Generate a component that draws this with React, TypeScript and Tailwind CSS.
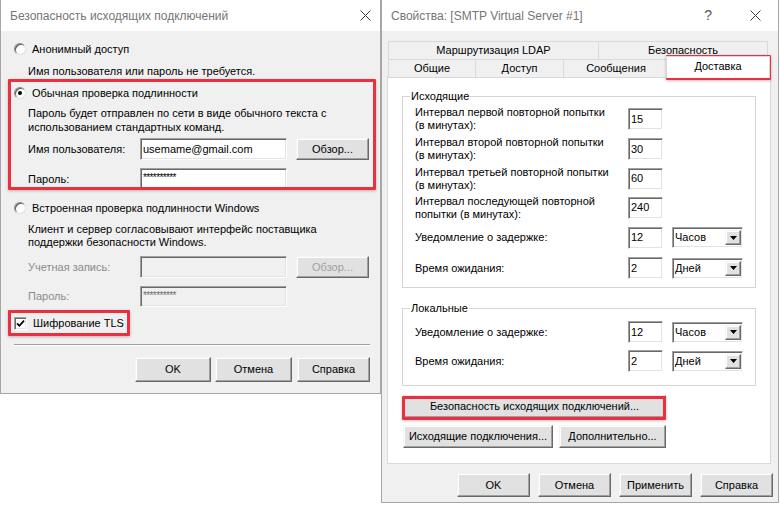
import type { ReactNode } from "react";

const sunken =
  "border border-t-[#a0a0a0] border-l-[#a0a0a0] border-b-white border-r-white shadow-[inset_1px_1px_0_#696969,inset_-1px_-1px_0_#e3e3e3]";
const raised =
  "border border-t-[#f4f4f4] border-l-[#f4f4f4] border-b-[#696969] border-r-[#696969] shadow-[inset_-1px_-1px_0_#a0a0a0,inset_1px_1px_0_#ffffff] bg-[#e1e1e1]";

function CloseIcon() {
  return (
    <svg width="11" height="11" viewBox="0 0 11 11">
      <path d="M0.5 0.5 L10.5 10.5 M10.5 0.5 L0.5 10.5" stroke="#3c3c3c" strokeWidth="1" fill="none" />
    </svg>
  );
}

function Radio({ checked = false }: { checked?: boolean }) {
  return (
    <span className="flex h-[12px] w-[12px] shrink-0 items-center justify-center rounded-full border border-t-[#8a8a8a] border-l-[#8a8a8a] border-b-[#e0e0e0] border-r-[#e0e0e0] bg-white shadow-[inset_1px_1px_0_#5a5a5a]">
      {checked && <span className="h-[4px] w-[4px] rounded-full bg-black" />}
    </span>
  );
}

function Checkbox() {
  return (
    <span className={`flex h-[13px] w-[13px] shrink-0 items-center justify-center bg-white ${sunken}`}>
      <svg width="9" height="9" viewBox="0 0 9 9">
        <path d="M1 4.3 L3.4 6.8 L8 1.6" stroke="#000" strokeWidth="1.7" fill="none" />
      </svg>
    </span>
  );
}

function TextBox({
  value = "",
  className,
  disabled = false,
  secret = false,
}: {
  value?: string;
  className: string;
  disabled?: boolean;
  secret?: boolean;
}) {
  return (
    <div
      className={`flex shrink-0 pl-[2px] ${sunken} ${
        secret ? "items-start pt-[1px] text-[10px] tracking-[-0.6px]" : "items-center"
      } ${disabled ? "bg-[#f0f0f0] text-[#6d6d6d]" : "bg-white text-black"} ${className}`}
    >
      {value}
    </div>
  );
}

function Btn({
  children,
  className,
  disabled = false,
}: {
  children: ReactNode;
  className: string;
  disabled?: boolean;
}) {
  return (
    <div
      className={`flex shrink-0 items-center justify-center whitespace-nowrap ${raised} ${
        disabled ? "text-[#a0a0a0]" : "text-black"
      } ${className}`}
    >
      {children}
    </div>
  );
}

function Select({ value }: { value: string }) {
  return (
    <div className={`flex h-[21px] w-[71px] shrink-0 items-center bg-white pl-[2px] pr-[1px] ${sunken}`}>
      <span className="flex-1">{value}</span>
      <span className={`flex h-[15px] w-[16px] items-center justify-center ${raised}`}>
        <svg width="7" height="4" viewBox="0 0 7 4">
          <path d="M0 0 H7 L3.5 4 Z" fill="#000" />
        </svg>
      </span>
    </div>
  );
}

function TitleBar({ title, help = false, pr }: { title: string; help?: boolean; pr: string }) {
  return (
    <div className={`flex h-[31px] shrink-0 items-center bg-white pl-[9px] ${pr}`}>
      <span className="flex-1 text-[12px] text-[#767676]">{title}</span>
      {help && <span className="mr-[38px] text-[14px] text-[#5a5a5a]">?</span>}
      <CloseIcon />
    </div>
  );
}

function LeftDialog() {
  return (
    <div className="flex h-[394px] w-[381px] shrink-0 flex-col border-x border-b border-[#a6a6a6] bg-[#f0f0f0]">
      <TitleBar title="Безопасность исходящих подключений" pr="pr-[9px]" />
      <div className="flex flex-col pl-[13px] pr-[10px]">
        <div className="mt-[9px] flex h-[18px] items-center gap-[6px]">
          <Radio />
          <span>Анонимный доступ</span>
        </div>
        <div className="ml-[14px] mt-[5px] flex h-[16px] items-center">
          Имя пользователя или пароль не требуется.
        </div>
        <div className="mt-[6px] flex h-[16px] items-center gap-[6px]">
          <Radio checked />
          <span>Обычная проверка подлинности</span>
        </div>
        <div className="ml-[14px] mt-[5px] leading-[14px]">
          Пароль будет отправлен по сети в виде обычного текста с<br />
          использованием стандартных команд.
        </div>
        <div className="mt-[4px] flex h-[22px] items-center">
          <span className="ml-[14px] w-[112px] shrink-0">Имя пользователя:</span>
          <TextBox value="usemame@gmail.com" className="h-[22px] w-[147px]" />
          <Btn className="ml-[9px] h-[22px] w-[73px]">Обзор...</Btn>
        </div>
        <div className="mt-[8px] flex h-[22px] items-center">
          <span className="ml-[14px] w-[112px] shrink-0">Пароль:</span>
          <TextBox value="**********" secret className="h-[22px] w-[147px]" />
        </div>
        <div className="mt-[10px] flex h-[16px] items-center gap-[6px]">
          <Radio />
          <span>Встроенная проверка подлинности Windows</span>
        </div>
        <div className="ml-[14px] mt-[7px] leading-[13px]">
          Клиент и сервер согласовывают интерфейс поставщика
          <br />
          поддержки безопасности Windows.
        </div>
        <div className="mt-[7px] flex h-[22px] items-center text-[#8a8a8a]">
          <span className="ml-[14px] w-[112px] shrink-0">Учетная запись:</span>
          <TextBox disabled className="h-[22px] w-[147px]" />
          <Btn disabled className="ml-[9px] h-[22px] w-[73px]">
            Обзор...
          </Btn>
        </div>
        <div className="mt-[8px] flex h-[21px] items-center text-[#8a8a8a]">
          <span className="ml-[14px] w-[112px] shrink-0">Пароль:</span>
          <TextBox disabled secret value="**********" className="h-[21px] w-[147px]" />
        </div>
        <div className="mt-[8px] flex h-[16px] items-center gap-[6px]">
          <Checkbox />
          <span>Шифрование TLS</span>
        </div>
        <div className="mt-[13px] h-[2px] border-t border-b border-t-[#a0a0a0] border-b-white" />
        <div className="mt-[11px] flex h-[25px] justify-end">
          <Btn className="h-[25px] w-[76px]">OK</Btn>
          <Btn className="ml-[4px] h-[25px] w-[77px]">Отмена</Btn>
          <Btn className="ml-[5px] h-[25px] w-[73px]">Справка</Btn>
        </div>
      </div>
    </div>
  );
}

function Tab({ label, className }: { label: string; className: string }) {
  return (
    <div
      className={`flex h-[18px] shrink-0 items-center justify-center border-l border-t border-[#d9d9d9] bg-[#f0f0f0] ${className}`}
    >
      {label}
    </div>
  );
}

function Row({ h, label, value, unit }: { h: string; label: ReactNode; value: string; unit?: string }) {
  return (
    <div className={`flex items-center pl-[12px] ${h}`}>
      <div className="w-[213px] shrink-0 leading-[13px]">{label}</div>
      <TextBox value={value} className="h-[22px] w-[35px]" />
      {unit && (
        <div className="ml-[9px]">
          <Select value={unit} />
        </div>
      )}
    </div>
  );
}

function RightDialog() {
  return (
    <div className="flex h-[503px] w-[398px] shrink-0 flex-col border-x border-b border-[#a6a6a6] bg-[#f0f0f0]">
      <TitleBar title="Свойства: [SMTP Virtual Server #1]" help pr="pr-[17px]" />
      <div className="mt-[10px] ml-[6px] flex w-[380px]">
        <Tab label="Маршрутизация LDAP" className="w-[210px]" />
        <Tab label="Безопасность" className="w-[170px] border-r" />
      </div>
      <div className="ml-[6px] flex h-[18px] w-[380px] items-end">
        <Tab label="Общие" className="w-[87px]" />
        <Tab label="Доступ" className="w-[88px]" />
        <Tab label="Сообщения" className="w-[105px]" />
        <div className="relative z-10 -mx-[2px] -mb-[1px] flex h-[22px] w-[104px] shrink-0 items-center justify-center border-x border-t border-[#d9d9d9] bg-white pb-[2px]">
          Доставка
        </div>
      </div>
      <div className="ml-[5px] flex h-[387px] w-[384px] flex-col border border-[#d9d9d9] bg-white">
        <fieldset className="mx-[14px] mt-[11px] border border-[#d5d5d5] px-0 pb-[4px] pt-[1px]">
          <legend className="ml-[7px] px-[1px] leading-[14px]">Исходящие</legend>
          <Row
            h="h-[30px]"
            value="15"
            label={
              <>
                Интервал первой повторной попытки
                <br />
                (в минутах):
              </>
            }
          />
          <Row
            h="h-[30px]"
            value="30"
            label={
              <>
                Интервал второй повторной попытки
                <br />
                (в минутах):
              </>
            }
          />
          <Row
            h="h-[29px]"
            value="60"
            label={
              <>
                Интервал третьей повторной попытки
                <br />
                (в минутах):
              </>
            }
          />
          <Row
            h="h-[29px]"
            value="240"
            label={
              <>
                Интервал последующей повторной
                <br />
                попытки (в минутах):
              </>
            }
          />
          <Row h="h-[31px]" value="12" unit="Часов" label="Уведомление о задержке:" />
          <Row h="h-[30px]" value="2" unit="Дней" label="Время ожидания:" />
        </fieldset>
        <fieldset className="mx-[14px] mt-[13px] border border-[#d5d5d5] px-0 pb-[10px] pt-[2px]">
          <legend className="ml-[7px] px-[1px] leading-[14px]">Локальные</legend>
          <Row h="h-[30px]" value="12" unit="Часов" label="Уведомление о задержке:" />
          <Row h="h-[28px]" value="2" unit="Дней" label="Время ожидания:" />
        </fieldset>
        <Btn className="ml-[15px] mt-[9px] h-[23px] w-[263px]">Безопасность исходящих подключений...</Btn>
        <div className="ml-[15px] mt-[7px] flex">
          <Btn className="h-[23px] w-[150px]">Исходящие подключения...</Btn>
          <Btn className="ml-[6px] h-[23px] w-[107px]">Дополнительно...</Btn>
        </div>
      </div>
      <div className="mt-[9px] flex justify-end gap-[8px] pr-[5px]">
        <Btn className="h-[24px] w-[73px]">OK</Btn>
        <Btn className="h-[24px] w-[73px]">Отмена</Btn>
        <Btn className="h-[24px] w-[73px]">Применить</Btn>
        <Btn className="h-[24px] w-[73px]">Справка</Btn>
      </div>
    </div>
  );
}

export default function App() {
  return (
    <div className="relative flex h-[505px] w-[780px] items-start overflow-hidden bg-white font-['Liberation_Sans',Arial,sans-serif] text-[11px] text-black">
      <LeftDialog />
      <RightDialog />
      {/* red annotation frames drawn over the dialogs */}
      <div className="pointer-events-none absolute left-[8px] top-[79px] h-[111px] w-[368px] rounded-[1px] border-[3px] border-[#ec2f3e] shadow-[0_1px_3px_rgba(0,0,0,0.25)]" />
      <div className="pointer-events-none absolute left-[8px] top-[310px] h-[26px] w-[122px] rounded-[1px] border-[3px] border-[#ec2f3e] shadow-[0_1px_3px_rgba(0,0,0,0.25)]" />
      <div className="pointer-events-none absolute left-[666px] top-[55px] h-[25px] w-[105px] rounded-[1px] border-[3px] border-[#ec2f3e] shadow-[0_1px_3px_rgba(0,0,0,0.25)]" />
      <div className="pointer-events-none absolute left-[402px] top-[396px] h-[24px] w-[264px] rounded-[1px] border-[3px] border-[#ec2f3e] shadow-[0_1px_3px_rgba(0,0,0,0.25)]" />
    </div>
  );
}
